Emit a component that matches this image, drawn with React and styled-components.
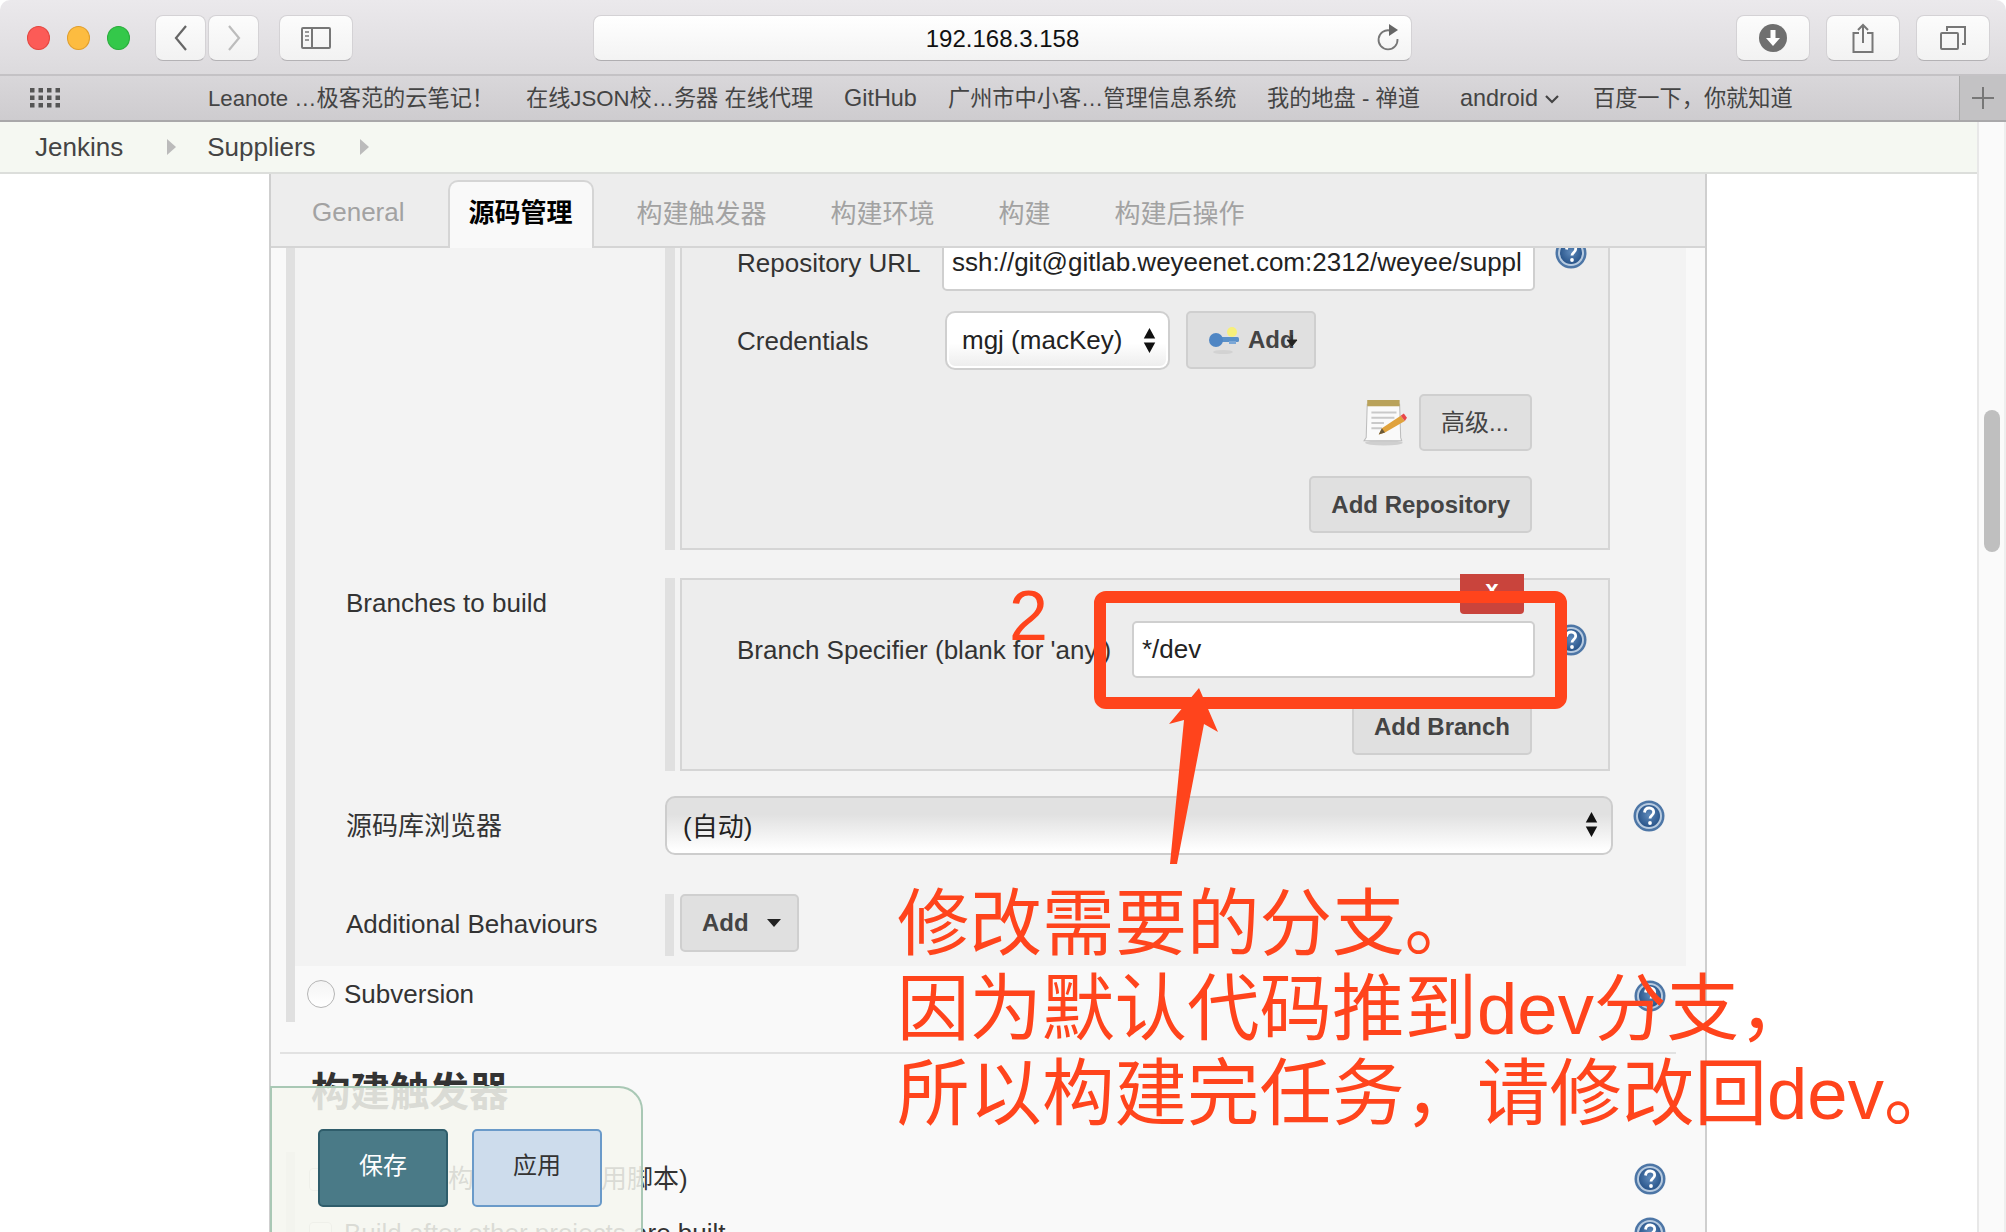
import React from "react";
import styled, { createGlobalStyle } from "styled-components";

const SANS = `"Liberation Sans", "Noto Sans CJK SC", sans-serif`;
const RED = "#ff441c";

const GlobalStyle = createGlobalStyle`
  html, body {
    margin: 0;
    padding: 0;
    background: #fff;
    overflow: hidden;
  }
  * {
    box-sizing: border-box;
  }
`;

const HelpIcon = () => (
  <HelpSvg viewBox="0 0 32 32">
    <defs>
      <radialGradient id="helpFill" cx="50%" cy="45%" r="60%">
        <stop offset="0%" stopColor="#5f8abb" />
        <stop offset="100%" stopColor="#234f85" />
      </radialGradient>
    </defs>
    <circle cx="16" cy="16" r="15.5" fill="#4d76a6" />
    <circle cx="16" cy="16" r="13" fill="#b8cbe0" />
    <circle cx="16" cy="16" r="11" fill="url(#helpFill)" />
    <path
      d="M11.5 12.5c.3-3 2.2-4.5 4.7-4.5 2.700 0 4.500 1.700 4.500 4 0 3.500-3.700 3.500-3.700 6.500"
      fill="none"
      stroke="#fff"
      strokeWidth="2.800"
    />
    <circle cx="17" cy="23" r="1.900" fill="#fff" />
  </HelpSvg>
);

const UpDownArrows = () => (
  <ArrowsSvg viewBox="0 0 12 24">
    <path d="M6 0l5.500 10H.5zM6 24L.5 14h11z" fill="#111" />
  </ArrowsSvg>
);

const App = () => {
  return (
    <Screen>
      <GlobalStyle />
      <Toolbar>
        <Lights>
          <Light $color="#fc5b57" $edge="#e3463f" />
          <Light $color="#fdbc40" $edge="#e09e2c" />
          <Light $color="#34c84a" $edge="#2aac3c" />
        </Lights>
        <NavGroup>
          <ToolButton $w={51}>
            <svg width="16" height="26" viewBox="0 0 16 26">
              <path d="M13 1L3 13l10 12" fill="none" stroke="#666" strokeWidth="2.200" />
            </svg>
          </ToolButton>
          <ToolButton $w={51}>
            <svg width="16" height="26" viewBox="0 0 16 26">
              <path d="M3 1l10 12L3 25" fill="none" stroke="#bcbcbc" strokeWidth="2.200" />
            </svg>
          </ToolButton>
        </NavGroup>
        <SidebarButton $w={74}>
          <svg width="30" height="22" viewBox="0 0 30 22">
            <rect x="1" y="1" width="28" height="20" rx="1" fill="none" stroke="#777" strokeWidth="2" />
            <path d="M11 1v20" stroke="#777" strokeWidth="2" />
            <path d="M4 5h4M4 9h4M4 13h4" stroke="#999" strokeWidth="2" />
          </svg>
        </SidebarButton>
        <AddressBar>
          192.168.3.158
          <ReloadSlot>
            <svg width="24" height="27" viewBox="0 0 24 27">
              <path d="M14 6.500A9.500 9.500 0 1 0 21.500 15" fill="none" stroke="#777" strokeWidth="1.800" />
              <path d="M13 0l9 6-9 6z" fill="#666" />
            </svg>
          </ReloadSlot>
        </AddressBar>
        <RightTools>
          <ToolButton $w={74}>
            <svg width="28" height="28" viewBox="0 0 28 28">
              <circle cx="14" cy="14" r="14" fill="#6f6f6f" />
              <path d="M11.500 6h5v8h4.500L14 22l-7-8h4.500z" fill="#fff" />
            </svg>
          </ToolButton>
          <ToolButton $w={74}>
            <svg width="22" height="30" viewBox="0 0 22 30">
              <path d="M7 10H1.500v19h19V10H15" fill="none" stroke="#777" strokeWidth="2" />
              <path d="M11 20V2M6 7l5-5 5 5" fill="none" stroke="#777" strokeWidth="2" />
            </svg>
          </ToolButton>
          <ToolButton $w={74}>
            <svg width="26" height="24" viewBox="0 0 26 24">
              <rect x="1" y="7" width="17" height="16" rx="1" fill="none" stroke="#777" strokeWidth="2" />
              <path d="M7 5V1h18v17h-3" fill="none" stroke="#777" strokeWidth="2" />
            </svg>
          </ToolButton>
        </RightTools>
      </Toolbar>

      <BookmarksBar>
        <AppsIcon viewBox="0 0 30 20">
          {[0, 1, 2].map(row =>
            [0, 1, 2, 3].map(col => (
              <rect key={`${row}-${col}`} x={col * 8.500} y={row * 7.500} width="4.500" height="4.500" fill="#555" />
            ))
          )}
        </AppsIcon>
        <Bookmarks>
          <span>Leanote …极客范的云笔记！</span>
          <span>在线JSON校…务器 在线代理</span>
          <LatinMark>GitHub</LatinMark>
          <span>广州市中小客…管理信息系统</span>
          <span>我的地盘 - 禅道</span>
          <LatinMark>
            android
            <svg width="14" height="9" viewBox="0 0 14 9" style={{ marginLeft: 7, verticalAlign: 2 }}>
              <path d="M1 1l6 6 6-6" fill="none" stroke="#444" strokeWidth="2.200" />
            </svg>
          </LatinMark>
          <span>百度一下，你就知道</span>
        </Bookmarks>
        <NewTab>
          <svg width="24" height="24" viewBox="0 0 24 24">
            <path d="M12 1v22M1 12h22" stroke="#777" strokeWidth="2" />
          </svg>
        </NewTab>
      </BookmarksBar>

      <PageArea>
        <PageColumn>
          <Breadcrumb>
            <Crumb>Jenkins</Crumb>
            <CrumbArrow />
            <Crumb>Suppliers</Crumb>
            <CrumbArrow />
          </Breadcrumb>
          <Main>
            <Panel>
              <Tabs>
                <Tab>General</Tab>
                <Tab $active>源码管理</Tab>
                <Tab $cjk>构建触发器</Tab>
                <Tab $cjk>构建环境</Tab>
                <Tab $cjk>构建</Tab>
                <Tab $cjk>构建后操作</Tab>
              </Tabs>
              <Scroller>
                <ScrollInner>
                  <ScmGroup>
                    <ScmSection>
                      <FormRow>
                        <div />
                        <Nested>
                          <Box $top={18} $bottom={15}>
                            <FieldRow>
                              <FieldLabel>Repository URL</FieldLabel>
                              <TextField>ssh://git@gitlab.weyeenet.com:2312/weyee/suppl</TextField>
                              <HelpSlot $offset={3}>
                                <HelpIcon />
                              </HelpSlot>
                            </FieldRow>
                            <FieldRow $gap={20}>
                              <FieldLabel>Credentials</FieldLabel>
                              <CredentialsLine>
                                <CredentialsSelect>
                                  mgj (macKey)
                                  <UpDownArrows />
                                </CredentialsSelect>
                                <KeyButton>
                                  <svg width="30" height="28" viewBox="0 0 30 28">
                                    <ellipse cx="14" cy="26" rx="10" ry="2" fill="#d2d2d2" />
                                    <circle cx="23" cy="6" r="5" fill="#f7ef7a" />
                                    <rect x="8" y="11" width="22" height="5" rx="1.500" fill="#5a90c8" />
                                    <circle cx="7" cy="14" r="7" fill="#4f86c4" />
                                    <rect x="20" y="15" width="7" height="3" fill="#7ba7d6" />
                                  </svg>
                                  Add
                                  <AddCaret viewBox="0 0 12 12">
                                    <path d="M6 0v5M1 5h10L6 11z" stroke="#222" strokeWidth="1" fill="#222" />
                                  </AddCaret>
                                </KeyButton>
                              </CredentialsLine>
                            </FieldRow>
                            <ActionRow $gap={24}>
                              <svg width="46" height="46" viewBox="0 0 44 44">
                                <ellipse cx="21" cy="41" rx="18" ry="2.500" fill="#cfcfcf" />
                                <path d="M5 4h31l1 32 1 3H2l2-3z" fill="#fafafa" stroke="#bdbdbd" />
                                <rect x="5" y="0" width="31" height="6" fill="#b9a25a" />
                                <path d="M9 12h24M9 17h22M9 22h12M9 27h10" stroke="#c9c9c9" strokeWidth="2" />
                                <path d="M16 33l3-6 18-12 4 5-19 11z" fill="#e0a23c" />
                                <path d="M37 15l3-2 3 4-2 3z" fill="#e8474a" />
                                <path d="M16 33l3-6 3 4z" fill="#6b5a3a" />
                              </svg>
                              <AdvancedButton>高级...</AdvancedButton>
                            </ActionRow>
                            <ActionRow $gap={25}>
                              <GreyButton $bold>Add Repository</GreyButton>
                            </ActionRow>
                          </Box>
                        </Nested>
                      </FormRow>

                      <FormRow $gap={28}>
                        <TopLabel>Branches to build</TopLabel>
                        <Nested>
                          <Box $top={41} $bottom={14}>
                            <DeleteButton>x</DeleteButton>
                            <BranchRow>
                              <FieldLabel>Branch Specifier (blank for 'any')</FieldLabel>
                              <TextField>*/dev</TextField>
                              <HelpSlot $offset={3}>
                                <HelpIcon />
                              </HelpSlot>
                            </BranchRow>
                            <ActionRow $gap={20}>
                              <GreyButton $bold>Add Branch</GreyButton>
                            </ActionRow>
                          </Box>
                        </Nested>
                      </FormRow>

                      <FormRow $gap={25} $center>
                        <Label>源码库浏览器</Label>
                        <SelectLine>
                          <BrowserSelect>
                            (自动)
                            <UpDownArrows />
                          </BrowserSelect>
                          <HelpSlot $offset={4}>
                            <HelpIcon />
                          </HelpSlot>
                        </SelectLine>
                      </FormRow>

                      <FormRow $gap={39} $center>
                        <BehavioursLabel>Additional Behaviours</BehavioursLabel>
                        <AddGroup>
                          <DropButton>
                            Add
                            <svg width="14" height="8" viewBox="0 0 14 8">
                              <path d="M0 0h14L7 8z" fill="#222" />
                            </svg>
                          </DropButton>
                        </AddGroup>
                      </FormRow>
                    </ScmSection>
                    <RadioRow>
                      <Radio />
                      <Label>Subversion</Label>
                      <HelpRight>
                        <HelpIcon />
                      </HelpRight>
                    </RadioRow>
                  </ScmGroup>

                  <Divider />
                  <Heading>构建触发器</Heading>

                  <TriggerGroup>
                    <TriggerRow>
                      <Checkbox />
                      <Label>触发远程构建 (例如,使用脚本)</Label>
                      <HelpRight>
                        <HelpIcon />
                      </HelpRight>
                    </TriggerRow>
                    <TriggerRow>
                      <Checkbox />
                      <Label>Build after other projects are built</Label>
                      <HelpRight>
                        <HelpIcon />
                      </HelpRight>
                    </TriggerRow>
                  </TriggerGroup>
                </ScrollInner>
              </Scroller>
            </Panel>
          </Main>
        </PageColumn>
        <ScrollTrack>
          <ScrollThumb />
        </ScrollTrack>
      </PageArea>

      <SaveBar>
        <SaveButton>保存</SaveButton>
        <ApplyButton>应用</ApplyButton>
      </SaveBar>

      {/* red marks drawn on top of the screenshot */}
      <MarkBox />
      <MarkNumber>2</MarkNumber>
      <MarkArrow viewBox="0 0 54 178">
        <path d="M33 0L52 44 38 36 11 176 4 176 18 32 3 36z" fill={RED} />
      </MarkArrow>
      <MarkNote>
        <div>修改需要的分支。</div>
        <div>因为默认代码推到dev分支，</div>
        <div>所以构建完任务，请修改回dev。</div>
      </MarkNote>
    </Screen>
  );
};

export default App;

const Screen = styled.div`
  position: relative;
  width: 2006px;
  height: 1232px;
  overflow: hidden;
  display: flex;
  flex-direction: column;
  font-family: ${SANS};
  font-size: 26px;
  color: #333;
  background: #fff;
`;

const Toolbar = styled.div`
  height: 76px;
  flex: none;
  display: flex;
  align-items: flex-start;
  padding: 15px 0 0 27px;
  border-radius: 10px 10px 0 0;
  background: linear-gradient(#ebe9ec, #dcdadd);
  border-bottom: 2px solid #c4c2c5;
`;

const Lights = styled.div`
  display: flex;
  gap: 17px;
  margin-top: 11px;
`;

const Light = styled.div`
  width: 23px;
  height: 24px;
  border-radius: 50%;
  background: ${props => props.$color};
  border: 1px solid ${props => props.$edge};
`;

const NavGroup = styled.div`
  display: flex;
  gap: 2px;
  margin-left: 25px;
`;

const ToolButton = styled.div`
  width: ${props => props.$w}px;
  height: 46px;
  display: flex;
  align-items: center;
  justify-content: center;
  border-radius: 8px;
  border: 1px solid #d4d2d5;
  border-bottom-color: #b4b2b5;
  background: linear-gradient(#fcfcfc, #f2f2f2);
`;

const SidebarButton = styled(ToolButton)`
  margin-left: 20px;
`;

const AddressBar = styled.div`
  position: relative;
  width: 819px;
  height: 46px;
  margin-left: 240px;
  padding-top: 2px;
  display: flex;
  align-items: center;
  justify-content: center;
  font-size: 24px;
  color: #111;
  border-radius: 8px;
  border: 1px solid #d4d2d5;
  border-bottom-color: #b0aeb1;
  background: linear-gradient(#fff, #f3f3f3);
`;

const ReloadSlot = styled.div`
  position: absolute;
  right: 11px;
  top: 8px;
  line-height: 0;
`;

const RightTools = styled.div`
  display: flex;
  gap: 16px;
  margin-left: 324px;
`;

const BookmarksBar = styled.div`
  height: 46px;
  flex: none;
  display: flex;
  align-items: center;
  padding-left: 30px;
  background: linear-gradient(#d9d7da, #cecccf);
  border-bottom: 2px solid #a9a8aa;
`;

const AppsIcon = styled.svg`
  width: 30px;
  height: 20px;
  margin-right: 148px;
`;

const Bookmarks = styled.div`
  display: grid;
  grid-template-columns: 318px 318px 104px 319px 193px 133px auto;
  align-items: baseline;
  font-size: 22.2px;
  line-height: 28px;
  color: #444;
  white-space: nowrap;
`;

const LatinMark = styled.span`
  font-size: 23.4px;
`;

const NewTab = styled.div`
  width: 47px;
  height: 44px;
  margin-left: auto;
  display: flex;
  align-items: center;
  justify-content: center;
  background: #c3c2c4;
  border-left: 1px solid #aaa;
`;

const PageArea = styled.div`
  flex: 1;
  min-height: 0;
  display: flex;
`;

const PageColumn = styled.div`
  width: 1977px;
  display: flex;
  flex-direction: column;
`;

const Breadcrumb = styled.div`
  height: 52px;
  flex: none;
  display: flex;
  align-items: center;
  padding-left: 35px;
  background: #f5f8f2;
  border-bottom: 2px solid #dcdedb;
`;

const Crumb = styled.span`
  font-size: 26px;
  color: #444;
`;

const CrumbArrow = styled.span`
  width: 0;
  height: 0;
  margin: 0 31px 0 44px;
  border-left: 9px solid #bbb;
  border-top: 8px solid transparent;
  border-bottom: 8px solid transparent;
`;

const Main = styled.div`
  flex: 1;
  min-height: 0;
  padding-left: 269px;
`;

const Panel = styled.div`
  width: 1438px;
  height: 100%;
  display: flex;
  flex-direction: column;
  background: #f9f9f9;
  border-left: 2px solid #cfcfcf;
  border-right: 2px solid #cfcfcf;
`;

const Tabs = styled.div`
  height: 74px;
  flex: none;
  display: flex;
  align-items: flex-end;
  padding-left: 9px;
  background: #ededed;
  border-bottom: 2px solid #d5d5d5;
`;

const Tab = styled.div`
  height: ${props => (props.$active ? "68px" : "67px")};
  margin-bottom: ${props => (props.$active ? "-2px" : "0")};
  margin-left: ${props => (props.$active ? "11px" : "0")};
  margin-right: ${props => (props.$active ? "11px" : "0")};
  padding: ${props => (props.$active ? "0 19px 9px" : props.$cjk ? "0 32px 3px" : "0 32px")};
  display: flex;
  align-items: center;
  font-size: 26px;
  font-weight: ${props => (props.$active ? "bold" : "normal")};
  color: ${props => (props.$active ? "#000" : "#a2a2a2")};
  background: ${props => (props.$active ? "#f9f9f9" : "transparent")};
  border: ${props => (props.$active ? "2px solid #d5d5d5" : "none")};
  border-bottom: none;
  border-radius: 10px 10px 0 0;
`;

const Scroller = styled.div`
  flex: 1;
  min-height: 0;
  overflow: hidden;
`;

const ScrollInner = styled.div`
  margin-top: -34px;
`;

const ScmGroup = styled.div`
  width: 1400px;
  margin-left: 15px;
  border-left: 9px solid #e0e0e0;
`;

const ScmSection = styled.div`
  padding: 0 0 10px 51px;
  background: #f3f3f3;
`;

const FormRow = styled.div`
  display: grid;
  grid-template-columns: 319px 1fr;
  align-items: ${props => (props.$center ? "center" : "start")};
  margin-top: ${props => props.$gap || 0}px;
`;

const Label = styled.div`
  font-size: 26px;
  line-height: 28px;
  color: #333;
  white-space: nowrap;
`;

const TopLabel = styled(Label)`
  padding-top: 11px;
`;

const BehavioursLabel = styled(Label)`
  padding-bottom: 2px;
`;

const Nested = styled.div`
  width: 945px;
  padding-left: 5px;
  border-left: 10px solid #e0e0e0;
`;

const Box = styled.div`
  position: relative;
  padding: ${props => props.$top}px 0 ${props => props.$bottom}px 55px;
  background: #ededed;
  border: 2px solid #d5d5d5;
`;

const FieldRow = styled.div`
  display: grid;
  grid-template-columns: 205px 593px auto;
  align-items: center;
  margin-top: ${props => props.$gap || 0}px;
`;

const BranchRow = styled(FieldRow)`
  grid-template-columns: 395px 403px auto;
`;

const FieldLabel = styled(Label)``;

const TextField = styled.div`
  height: 57px;
  padding: 0 8px;
  display: flex;
  align-items: center;
  white-space: nowrap;
  font-size: 26px;
  color: #222;
  background: #fff;
  border: 2px solid #cfcfcf;
  border-radius: 5px;
`;

const HelpSlot = styled.div`
  align-self: start;
  margin-left: 20px;
  margin-top: ${props => props.$offset}px;
  line-height: 0;
`;

const HelpSvg = styled.svg`
  width: 32px;
  height: 32px;
`;

const ArrowsSvg = styled.svg`
  width: 13px;
  height: 25px;
  flex: none;
`;

const CredentialsLine = styled.div`
  display: flex;
  gap: 16px;
  margin-left: 3px;
`;

const CredentialsSelect = styled.div`
  width: 225px;
  height: 59px;
  padding: 0 12px 0 15px;
  display: flex;
  align-items: center;
  justify-content: space-between;
  font-size: 26px;
  color: #222;
  background: linear-gradient(#fff 55%, #ececec);
  border: 2px solid #cfcfcf;
  border-radius: 10px;
  box-shadow: inset 0 0 0 2px #fff;
`;

const GreyButton = styled.div`
  height: 57px;
  padding: 0 20px;
  display: flex;
  align-items: center;
  font-size: 24px;
  font-weight: ${props => (props.$bold ? "bold" : "normal")};
  color: #444;
  white-space: nowrap;
  background: #e0e0e0;
  border: 2px solid #cfcfcf;
  border-radius: 5px;
`;

const AdvancedButton = styled(GreyButton)`
  padding: 0 21px 4px 20px;
`;

const KeyButton = styled(GreyButton)`
  position: relative;
  width: 130px;
  height: 58px;
  padding: 0 0 0 21px;
  gap: 9px;
  font-weight: bold;
`;

const AddCaret = styled.svg`
  position: absolute;
  left: 98px;
  top: 22px;
  width: 12px;
  height: 12px;
`;

const ActionRow = styled.div`
  display: flex;
  align-items: center;
  justify-content: flex-end;
  gap: 11px;
  margin-top: ${props => props.$gap}px;
  padding-right: 76px;
`;

const DeleteButton = styled.div`
  position: absolute;
  top: -6px;
  right: 84px;
  width: 64px;
  height: 40px;
  text-align: center;
  font-size: 24px;
  font-weight: bold;
  line-height: 30px;
  color: #fff;
  background: #c9443c;
  border-radius: 0 0 4px 4px;
`;

const SelectLine = styled.div`
  display: flex;
  align-items: flex-start;
`;

const BrowserSelect = styled.div`
  width: 948px;
  height: 59px;
  padding: 0 13px 3px 16px;
  display: flex;
  align-items: center;
  justify-content: space-between;
  font-size: 26px;
  color: #222;
  background: linear-gradient(#e1e1e1 30%, #fff 95%);
  border: 2px solid #cdcdcd;
  border-radius: 10px;
`;

const AddGroup = styled.div`
  height: 62px;
  padding-left: 6px;
  border-left: 9px solid #e0e0e0;
`;

const DropButton = styled(GreyButton)`
  display: inline-flex;
  width: 119px;
  height: 58px;
  padding: 0 0 0 20px;
  gap: 18px;
  font-weight: bold;
`;

const RadioRow = styled.div`
  height: 56px;
  display: flex;
  align-items: flex-start;
  gap: 9px;
  padding: 14px 20px 0 12px;
`;

const Radio = styled.div`
  width: 28px;
  height: 28px;
  border-radius: 50%;
  background: linear-gradient(#f4f4f4, #fff);
  border: 1px solid #b5b5b5;
`;

const HelpRight = styled.div`
  margin-left: auto;
  line-height: 0;
`;

const Divider = styled.div`
  width: 1396px;
  height: 2px;
  margin: 30px 0 0 9px;
  background: #e2e2e2;
`;

const Heading = styled.h2`
  margin: 15px 0 0 40px;
  font-size: 39.5px;
  line-height: 46px;
  font-weight: bold;
  color: #333;
`;

const TriggerGroup = styled.div`
  width: 1400px;
  margin: 37px 0 0 15px;
  border-left: 9px solid #e0e0e0;
`;

const TriggerRow = styled.div`
  height: 54px;
  display: flex;
  align-items: center;
  gap: 12px;
  padding: 0 20px 0 14px;
`;

const Checkbox = styled.div`
  width: 23px;
  height: 23px;
  background: #fff;
  border: 1px solid #c4c4c4;
  border-radius: 4px;
`;

const ScrollTrack = styled.div`
  flex: 1;
  padding: 288px 0 0 5px;
  background: #fafafa;
  border-left: 2px solid #e8e8e8;
  border-right: 2px solid #eeeeee;
`;

const ScrollThumb = styled.div`
  width: 16px;
  height: 142px;
  border-radius: 8px;
  background: #bfbfbf;
`;

const SaveBar = styled.div`
  position: absolute;
  left: 270px;
  bottom: 0;
  width: 373px;
  height: 146px;
  display: flex;
  gap: 24px;
  padding: 41px 0 0 46px;
  background: rgba(246, 247, 240, 0.86);
  border: 2px solid #a9c8b5;
  border-bottom: none;
  border-radius: 0 24px 0 0;
`;

const SaveButton = styled.div`
  width: 130px;
  height: 78px;
  padding-bottom: 9px;
  display: flex;
  align-items: center;
  justify-content: center;
  font-size: 24px;
  color: #fff;
  background: #4a7a87;
  border: 2px solid #2f5d6b;
  border-radius: 5px;
`;

const ApplyButton = styled(SaveButton)`
  color: #333;
  background: #cddcec;
  border-color: #6a9ac9;
`;

const MarkBox = styled.div`
  position: absolute;
  left: 1094px;
  top: 591px;
  width: 473px;
  height: 118px;
  border: 12px solid ${RED};
  border-radius: 12px;
`;

const MarkNumber = styled.div`
  position: absolute;
  left: 1009px;
  top: 576px;
  font-size: 70px;
  line-height: 80px;
  color: ${RED};
`;

const MarkArrow = styled.svg`
  position: absolute;
  left: 1166px;
  top: 688px;
  width: 54px;
  height: 178px;
`;

const MarkNote = styled.div`
  position: absolute;
  left: 897px;
  top: 881px;
  font-size: 72.5px;
  line-height: 85px;
  color: ${RED};
  white-space: nowrap;
`;
